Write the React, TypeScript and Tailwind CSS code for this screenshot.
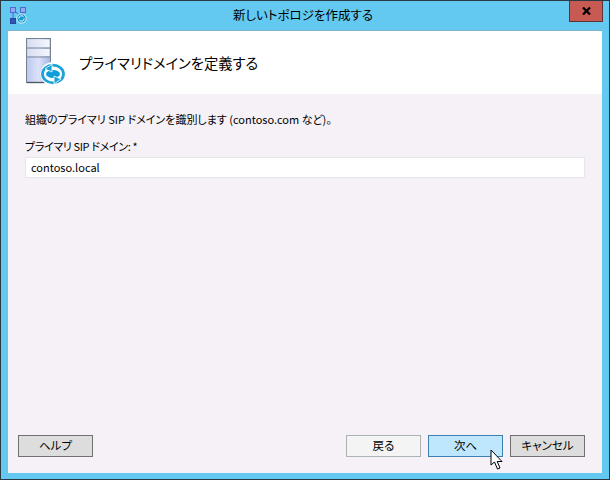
import React from 'react';

const font = { fontFamily: '"Noto Sans CJK JP", "Open Sans", sans-serif' };

function TopologyIcon() {
  return (
    <svg width="17" height="17" viewBox="0 0 17 17" className="block">
      <path d="M3 5 L3 11 M5 4 L11 10 M13 5 L13 8" stroke="#4a68c8" strokeWidth="1" fill="none" />
      <rect x="0.5" y="0.5" width="5" height="5" fill="#93a9ee" stroke="#4d6bcb" />
      <rect x="10.5" y="0.5" width="5" height="5" fill="#93a9ee" stroke="#4d6bcb" />
      <rect x="0.5" y="11.5" width="5" height="5" fill="#2f55b8" stroke="#27469c" />
      <circle cx="11.5" cy="11.5" r="4.7" fill="#189ad0" stroke="#e6f6fc" strokeWidth="1" />
      <path d="M8.8 11.5a2.7 2.7 0 0 1 4.7-1.8M14.2 11.5a2.7 2.7 0 0 1-4.7 1.8" stroke="#fff" strokeWidth="1" fill="none" />
    </svg>
  );
}

function ServerIcon() {
  return (
    <svg width="40" height="50" viewBox="0 0 40 50" className="block">
      <defs>
        <linearGradient id="srv" x1="0" y1="0" x2="1" y2="0">
          <stop offset="0" stopColor="#bcc7ee" />
          <stop offset="0.5" stopColor="#dbe2fa" />
          <stop offset="1" stopColor="#a8b5e2" />
        </linearGradient>
        <linearGradient id="srvTop" x1="0" y1="0" x2="1" y2="0">
          <stop offset="0" stopColor="#d8ddf2" />
          <stop offset="1" stopColor="#f5f6fd" />
        </linearGradient>
      </defs>
      <rect x="0.5" y="0.5" width="24" height="44" fill="url(#srv)" stroke="#75838f" />
      <rect x="1.5" y="1.5" width="22" height="8" fill="url(#srvTop)" />
      <rect x="1.5" y="11" width="22" height="7" fill="url(#srvTop)" />
      <path d="M1 10h23M1 19h23" stroke="#7f8c9a" strokeWidth="1.2" />
      <path d="M1 44.5h24" stroke="#4f5c68" strokeWidth="1.4" />
      <ellipse cx="27" cy="36" rx="12.5" ry="12" fill="#fff" />
      <ellipse cx="27" cy="36" rx="10.5" ry="8.8" fill="#fff" stroke="#1da3d6" strokeWidth="2.8" />
      <ellipse cx="27" cy="36" rx="7" ry="4" fill="#0f9ed8" />
      <path d="M19 31l7-5v8zM35 41l-7 5v-8z" fill="#1da3d6" stroke="#fff" strokeWidth="0.8" />
    </svg>
  );
}

function Button({ label, className }: { label: string; className: string }) {
  return (
    <div className={`flex h-[22px] w-[75px] items-center justify-center border text-[11.5px] leading-none text-black ${className}`}>
      {label}
    </div>
  );
}

export default function App() {
  return (
    <div className="relative flex h-[480px] w-[610px] flex-col overflow-hidden border border-[#2b3a42] bg-[#63c9f0] [font-feature-settings:'palt']" style={font}>
      {/* Title bar */}
      <div className="relative flex h-[29px] shrink-0 items-center justify-center pr-[4px]">
        <div className="absolute left-[9px] top-[6px]">
          <TopologyIcon />
        </div>
        <span className="text-[12.5px] text-black">新しいトポロジを作成する</span>
        <div className="absolute right-[6px] top-0 flex h-[21px] w-[34px] items-center justify-center border-x border-b border-[#5c3433] bg-[#c75a52]">
          <svg width="9" height="8" viewBox="0 0 9 8">
            <path d="M1 0.5 L8 7.5 M8 0.5 L1 7.5" stroke="#000" strokeWidth="2.2" fill="none" />
          </svg>
        </div>
      </div>

      {/* Dialog */}
      <div className="mx-[7px] mb-[6px] flex flex-1 flex-col border-t border-[#7fb2cf]">
        <div className="flex h-[63px] shrink-0 items-center bg-white pl-[18px]">
          <ServerIcon />
          <span className="ml-[13px] text-[14.3px] text-black">プライマリドメインを定義する</span>
        </div>

        <div className="flex flex-1 flex-col bg-[#f5f1f6] pl-[10px] pr-[17px]">
          <p className="ml-[7px] mt-[17px] text-[11px] leading-4 text-black">組織のプライマリ SIP ドメインを識別します (contoso.com など)。</p>
          <p className="ml-[7px] mt-[11px] text-[11px] leading-4 tracking-[-0.35px] text-black">プライマリ SIP ドメイン: *</p>
          <div className="ml-[7px] mt-[3px] flex h-[21px] w-[560px] items-center border border-[#e6e6ea] bg-white pl-[5px] text-[11px] text-black">
            contoso.local
          </div>

          <div className="mt-auto mb-[16px] flex items-center">
            <Button label="ヘルプ" className="border-[#707070] bg-[#dddddd]" />
            <div className="ml-auto flex gap-[7px]">
              <Button label="戻る" className="border-[#adb2b5] bg-[#f4f4f4]" />
              <Button label="次へ" className="border-[#3c7fb1] bg-[#bee6fd]" />
              <Button label="キャンセル" className="border-[#707070] bg-[#dddddd]" />
            </div>
          </div>
        </div>
      </div>

      {/* Mouse pointer */}
      <svg width="14" height="22" viewBox="0 0 14 22" className="absolute left-[489px] top-[448px]">
        <path d="M1 1 L1 16 L4.5 13 L7.5 20 L10 19 L7.2 12.5 L12 12.5 Z" fill="#fff" stroke="#000" strokeWidth="1" />
      </svg>
    </div>
  );
}
